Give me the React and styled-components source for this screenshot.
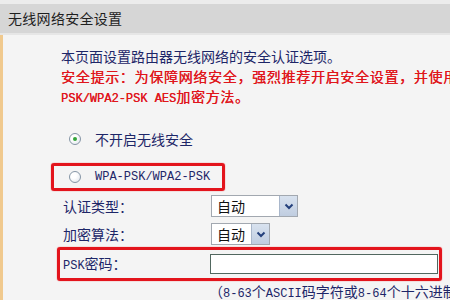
import React from 'react'
import styled, { createGlobalStyle } from 'styled-components'

const GlobalStyle = createGlobalStyle`
    html, body {
        margin: 0;
        padding: 0;
        background: #f4f4f4;
    }
    body {
        width: 450px;
        height: 300px;
        overflow: hidden;
        font-family: "Noto Sans CJK SC", "Noto Sans", sans-serif;
        font-size: 14px;
    }
`

const Page = styled.div`
    display: flex;
    flex-direction: column;
    width: 450px;
    height: 300px;
    overflow: hidden;
`

const TopStrip = styled.div`
    height: 4px;
    background: #ececec;
`

const Header = styled.div`
    height: 29px;
    line-height: 29px;
    padding-left: 8px;
    background: #d6d6d6;
    color: #1e1e1e;
    font-size: 14px;
    letter-spacing: 0.3px;
`

const HeaderRule = styled.div`
    height: 2px;
    background: #e6e6e6;
`

const Body = styled.div`
    flex: 1;
    display: flex;
    flex-direction: column;
    border-left: 3px solid #f0c98e;
`

const Notes = styled.div`
    padding: 11px 0 0 58px;
    white-space: nowrap;
    overflow: hidden;
`

const NoteLine = styled.div`
    height: 20px;
    line-height: 20px;
    color: ${p => p.warn ? '#e0161c' : '#1d2668'};
    letter-spacing: ${p => p.warn ? '0.7px' : '0'};
    text-shadow: ${p => p.warn ? '0.3px 0 0 #e0161c' : 'none'};
`

const Latin = styled.span`
    font-family: "Liberation Mono", monospace;
    font-size: 12px;
    letter-spacing: 0;
`

const RadioRow = styled.label`
    display: flex;
    align-items: center;
    gap: 14px;
    height: 24px;
    margin: 21px 0 0 66px;
    color: #1d2668;
`

const Highlight = styled.label`
    display: flex;
    align-items: center;
    gap: 14px;
    align-self: flex-start;
    box-sizing: border-box;
    width: 174px;
    height: 28px;
    margin: 12px 0 0 48px;
    padding-left: 15px;
    border: 3px solid #e3141c;
    border-radius: 3px;
    box-shadow: 0 0 1px #e3141c;
    color: #1d2668;
`

const RadioCircle = styled.span`
    position: relative;
    box-sizing: border-box;
    width: 12px;
    height: 12px;
    border-radius: 50%;
    border: 1px solid #8696a6;
    background: radial-gradient(circle at 35% 35%, #ffffff 30%, #dde3ea 100%);
    flex-shrink: 0;

    &::after {
        content: '';
        display: ${p => p.checked ? 'block' : 'none'};
        position: absolute;
        left: 3px;
        top: 3px;
        width: 4px;
        height: 4px;
        border-radius: 50%;
        background: #33a43a;
    }
`

const FormRow = styled.div`
    display: grid;
    grid-template-columns: 148px auto;
    align-items: center;
    height: 22px;
    margin: ${p => p.gap}px 0 0 60px;
`

const Label = styled.span`
    color: #1d2668;
    line-height: 20px;
`

const SelectBox = styled.div`
    display: flex;
    box-sizing: border-box;
    width: ${p => p.width}px;
    height: 22px;
    border: 1px solid #a2a8b0;
    background: #fff;
`

const SelectValue = styled.span`
    flex: 1;
    padding-left: 5px;
    line-height: 20px;
    color: #111;
`

const SelectButton = styled.span`
    display: flex;
    align-items: center;
    justify-content: center;
    width: 17px;
    background: linear-gradient(#d8e2ef, #c0cde0);
    border-left: 1px solid #a9b7cb;
`

const PskBox = styled.div`
    display: grid;
    grid-template-columns: 147px 228px;
    align-items: center;
    align-self: flex-start;
    box-sizing: border-box;
    width: 385px;
    height: 34px;
    margin: 2px 0 0 54px;
    padding-left: 3px;
    border: 3px solid #e3141c;
    border-radius: 3px;
    box-shadow: 0 0 1px #e3141c;
`

const TextInput = styled.div`
    box-sizing: border-box;
    height: 20px;
    border: 1px solid #51675f;
    background: #fff;
`

const Hint = styled.div`
    height: 18px;
    line-height: 18px;
    margin: 1px 0 0 206px;
    color: #1d2668;
    white-space: nowrap;
`

const Chevron = () => (
    <svg width="10" height="7" viewBox="0 0 10 7">
        <path d="M1.5 1.5 L5 5 L8.5 1.5" fill="none" stroke="#24407c" strokeWidth="2" />
    </svg>
)

const Select = ({ width, value }) => (
    <SelectBox width={width}>
        <SelectValue>{value}</SelectValue>
        <SelectButton><Chevron /></SelectButton>
    </SelectBox>
)

const App = () => {
    return (
        <Page>
            <GlobalStyle />
            <TopStrip />
            <Header>无线网络安全设置</Header>
            <HeaderRule />
            <Body>
                <Notes>
                    <NoteLine>本页面设置路由器无线网络的安全认证选项。</NoteLine>
                    <NoteLine warn>安全提示：为保障网络安全，强烈推荐开启安全设置，并使用<Latin>WPA-</Latin></NoteLine>
                    <NoteLine warn><Latin>PSK/WPA2-PSK AES</Latin>加密方法。</NoteLine>
                </Notes>

                <RadioRow>
                    <RadioCircle checked />
                    <span>不开启无线安全</span>
                </RadioRow>
                <Highlight>
                    <RadioCircle />
                    <Latin>WPA-PSK/WPA2-PSK</Latin>
                </Highlight>

                <FormRow gap={4}>
                    <Label>认证类型：</Label>
                    <Select width={87} value="自动" />
                </FormRow>
                <FormRow gap={6}>
                    <Label>加密算法：</Label>
                    <Select width={59} value="自动" />
                </FormRow>

                <PskBox>
                    <Label><Latin>PSK</Latin>密码：</Label>
                    <TextInput />
                </PskBox>
                <Hint>（<Latin>8-63</Latin>个<Latin>ASCII</Latin>码字符或<Latin>8-64</Latin>个十六进制字符）</Hint>
            </Body>
        </Page>
    )
}

export default App
